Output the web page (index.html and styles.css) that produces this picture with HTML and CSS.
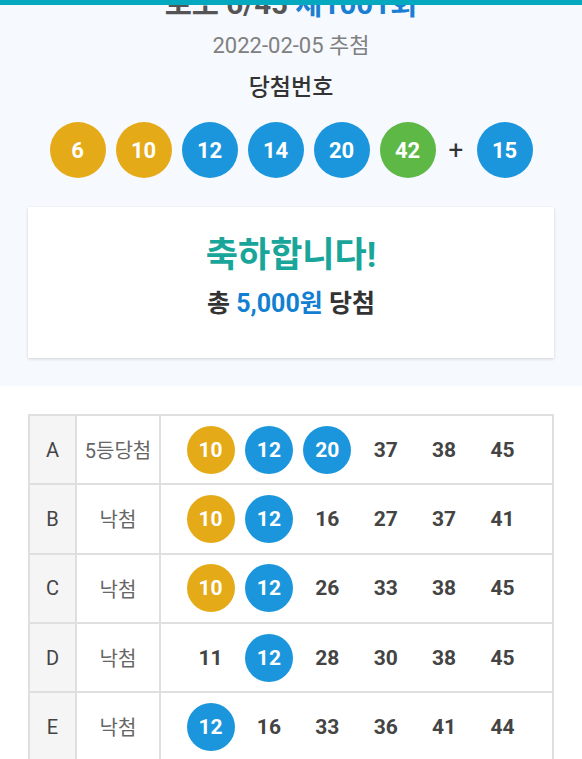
FILE: index.html
```html
<!DOCTYPE html>
<html lang="ko">
<head>
<meta charset="utf-8">
<title>로또 6/45 제1001회</title>
<link rel="stylesheet" href="styles.css">
</head>
<body>
<div class="topbar"></div>
<section class="header">
  <h1 class="title">로또 6/45 <span class="round">제1001회</span></h1>
  <p class="date">2022-02-05 추첨</p>
  <p class="label">당첨번호</p>
  <div class="balls">
    <span class="ball yellow">6</span>
    <span class="ball yellow">10</span>
    <span class="ball blue">12</span>
    <span class="ball blue">14</span>
    <span class="ball blue">20</span>
    <span class="ball green">42</span>
    <span class="plus">+</span>
    <span class="ball blue">15</span>
  </div>
  <div class="card">
    <p class="congrats">축하합니다!</p>
    <p class="total">총 <span class="amount">5,000원</span> 당첨</p>
  </div>
</section>
<section class="results">
  <table class="tickets">
    <tr>
      <td class="key">A</td>
      <td class="rank">5등당첨</td>
      <td class="nums"><div class="numrow"><span class="num ball yellow">10</span><span class="num ball blue">12</span><span class="num ball blue">20</span><span class="num">37</span><span class="num">38</span><span class="num">45</span></div></td>
    </tr>
    <tr>
      <td class="key">B</td>
      <td class="rank">낙첨</td>
      <td class="nums"><div class="numrow"><span class="num ball yellow">10</span><span class="num ball blue">12</span><span class="num">16</span><span class="num">27</span><span class="num">37</span><span class="num">41</span></div></td>
    </tr>
    <tr>
      <td class="key">C</td>
      <td class="rank">낙첨</td>
      <td class="nums"><div class="numrow"><span class="num ball yellow">10</span><span class="num ball blue">12</span><span class="num">26</span><span class="num">33</span><span class="num">38</span><span class="num">45</span></div></td>
    </tr>
    <tr>
      <td class="key">D</td>
      <td class="rank">낙첨</td>
      <td class="nums"><div class="numrow"><span class="num">11</span><span class="num ball blue">12</span><span class="num">28</span><span class="num">30</span><span class="num">38</span><span class="num">45</span></div></td>
    </tr>
    <tr>
      <td class="key">E</td>
      <td class="rank">낙첨</td>
      <td class="nums"><div class="numrow"><span class="num ball blue">12</span><span class="num">16</span><span class="num">33</span><span class="num">36</span><span class="num">41</span><span class="num">44</span></div></td>
    </tr>
  </table>
</section>
</body>
</html>
```
FILE: styles.css
```css
html, body {
  margin: 0;
  padding: 0;
}
body {
  font-family: Roboto, "Noto Sans CJK KR", "Noto Sans", sans-serif;
  background: #ffffff;
  color: #333333;
  overflow: hidden;
}
p, h1 {
  margin: 0;
}
.topbar {
  position: fixed;
  top: 0;
  left: 0;
  right: 0;
  height: 5px;
  background: #05a9bf;
  z-index: 10;
}
.header {
  background: #f6f9fe;
  padding: 0 28px 28px;
  text-align: center;
}
.title {
  margin-top: -11px;
  font-size: 29.5px;
  line-height: 30px;
  font-weight: 700;
  color: #555555;
  white-space: nowrap;
}
.round {
  color: #1a7fd2;
}
.date {
  margin-top: 14px;
  font-size: 22px;
  line-height: 26px;
  color: #808080;
}
.label {
  margin-top: 16px;
  font-size: 23px;
  line-height: 26px;
  font-weight: 500;
  color: #333333;
}
.balls {
  margin-top: 21px;
  display: flex;
  justify-content: center;
  align-items: center;
  gap: 10px;
}
.ball {
  display: flex;
  align-items: center;
  justify-content: center;
  border-radius: 50%;
  color: #ffffff;
  font-weight: 700;
}
.balls .ball {
  width: 56px;
  height: 56px;
  font-size: 22px;
}
.yellow { background: #e5aa17; }
.blue { background: #1b96dc; }
.green { background: #5db846; }
.plus {
  font-size: 26px;
  font-weight: 400;
  color: #333333;
  width: 15px;
  margin: 0 3px;
  line-height: 1;
}
.card {
  margin-top: 29px;
  background: #ffffff;
  box-shadow: 0 1px 3px rgba(0, 0, 0, 0.16);
  padding: 29px 0 40px;
}
.congrats {
  font-size: 35px;
  line-height: 40px;
  font-weight: 700;
  color: #1aa59a;
}
.total {
  margin-top: 14px;
  font-size: 25px;
  line-height: 28px;
  font-weight: 700;
  color: #333333;
}
.amount {
  color: #127fd0;
}
.results {
  padding: 28px 28px 0 28px;
}
.tickets {
  width: 100%;
  border-collapse: collapse;
  border: 2px solid #dfdfdf;
}
.tickets td {
  border: 2px solid #dfdfdf;
  height: 67.3px;
  padding: 0;
  text-align: center;
}
.key {
  width: 45px;
  background: #f5f5f5;
  font-size: 20px;
  color: #444444;
}
.rank {
  width: 82px;
  font-size: 20px;
  color: #666666;
}
.numrow {
  display: flex;
  justify-content: center;
  align-items: center;
  gap: 10.4px;
}
.num {
  width: 48px;
  height: 48px;
  display: flex;
  align-items: center;
  justify-content: center;
  font-size: 21px;
  font-weight: 700;
  color: #444444;
}
.num.ball {
  color: #ffffff;
}
```
